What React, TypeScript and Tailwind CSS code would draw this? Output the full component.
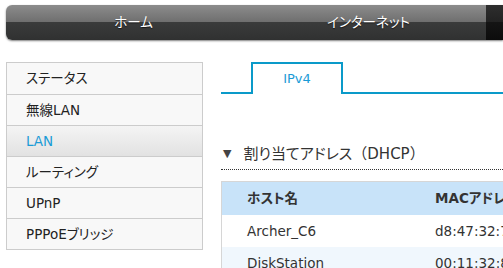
import React from 'react';

const FONT = {
  fontFamily: '"DejaVu Sans", "Noto Sans CJK JP", sans-serif',
  fontFeatureSettings: '"palt"',
};

const SIDE_ITEMS = ['ステータス', '無線LAN', 'LAN', 'ルーティング', 'UPnP', 'PPPoEブリッジ'];

const ROWS = [
  { host: 'Archer_C6', mac: 'd8:47:32:7a:1c:02' },
  { host: 'DiskStation', mac: '00:11:32:8e:4f:a1' },
];

export default function App() {
  return (
    <div className="w-[503px] h-[268px] overflow-hidden bg-white text-[#333]" style={FONT}>
      {/* Top nav */}
      <div className="pt-[5px] pl-[6px]">
        <div className="flex h-[35px] rounded-l-[6px] overflow-hidden shadow-[0_1px_2px_rgba(0,0,0,0.5)] bg-[linear-gradient(to_bottom,#8c8c8c_0%,#6e6e6e_50%,#3a3b3b_50%,#303131_100%)] pl-[10px]">
          <div className="w-[235px] shrink-0 flex items-center justify-center text-white text-[13.5px] [text-shadow:0_1px_1px_rgba(0,0,0,0.6)]">ホーム</div>
          <div className="w-[235px] shrink-0 flex items-center justify-center text-white text-[13.5px] [text-shadow:0_1px_1px_rgba(0,0,0,0.6)]">インターネット</div>
          <div className="flex-1 bg-[linear-gradient(to_bottom,#2e2e2e_0%,#222_50%,#141414_50%,#0c0c0c_100%)]" />
        </div>
      </div>

      <div className="flex mt-[22px]">
        {/* Sidebar */}
        <div className="ml-[6px] w-[197px] shrink-0 border border-[#cccccc] self-start">
          {SIDE_ITEMS.map((item, i) => (
            <div
              key={item}
              className={`h-[31px] flex items-center pl-[19px] text-[13.5px] ${i > 0 ? 'border-t border-[#cccccc]' : ''} ${
                item === 'LAN'
                  ? 'bg-[linear-gradient(to_bottom,#f4f4f4,#e2e2e2)] text-[#1a9bd6]'
                  : 'bg-[#f8f8f8] text-[#222]'
              }`}
            >
              {item}
            </div>
          ))}
        </div>

        {/* Content */}
        <div className="ml-[18px] flex-1 min-w-0">
          <div className="flex items-end h-[32px]">
            <div className="w-[30px] border-b-2 border-[#0a9ac9]" />
            <div className="w-[92px] h-[32px] border-2 border-b-0 border-[#0a9ac9] flex items-center justify-center text-[13px] text-[#1a9bd6]">
              IPv4
            </div>
            <div className="flex-1 border-b-2 border-[#0a9ac9]" />
          </div>

          <div className="mt-[50px] flex items-center h-[20px] text-[15px] text-[#333]">
            <span className="text-[11px] text-[#444] ml-[2px] mr-[12px]">▼</span>
            <span>
              割り当てアドレス<span className="[font-feature-settings:normal]">（</span>DHCP<span className="[font-feature-settings:normal]">）</span>
            </span>
          </div>
          <div className="mt-[5px] border-b border-dotted border-[#333]" />

          <div className="mt-[11px] w-[400px] border-l border-t border-[#d6d6d6]">
            <div className="flex h-[33px] items-center bg-[#c8e3f9] text-[13.5px] font-bold text-[#333]">
              <div className="w-[213px] pl-[25px]">ホスト名</div>
              <div className="whitespace-nowrap">MACアドレス</div>
            </div>
            {ROWS.map((r, i) => (
              <div key={r.host} className={`flex h-[32px] items-center text-[13.5px] ${i % 2 ? 'bg-[#f0f7fd]' : 'bg-white'}`}>
                <div className="w-[213px] pl-[25px]">{r.host}</div>
                <div className="whitespace-nowrap">{r.mac}</div>
              </div>
            ))}
          </div>
        </div>
      </div>
    </div>
  );
}
